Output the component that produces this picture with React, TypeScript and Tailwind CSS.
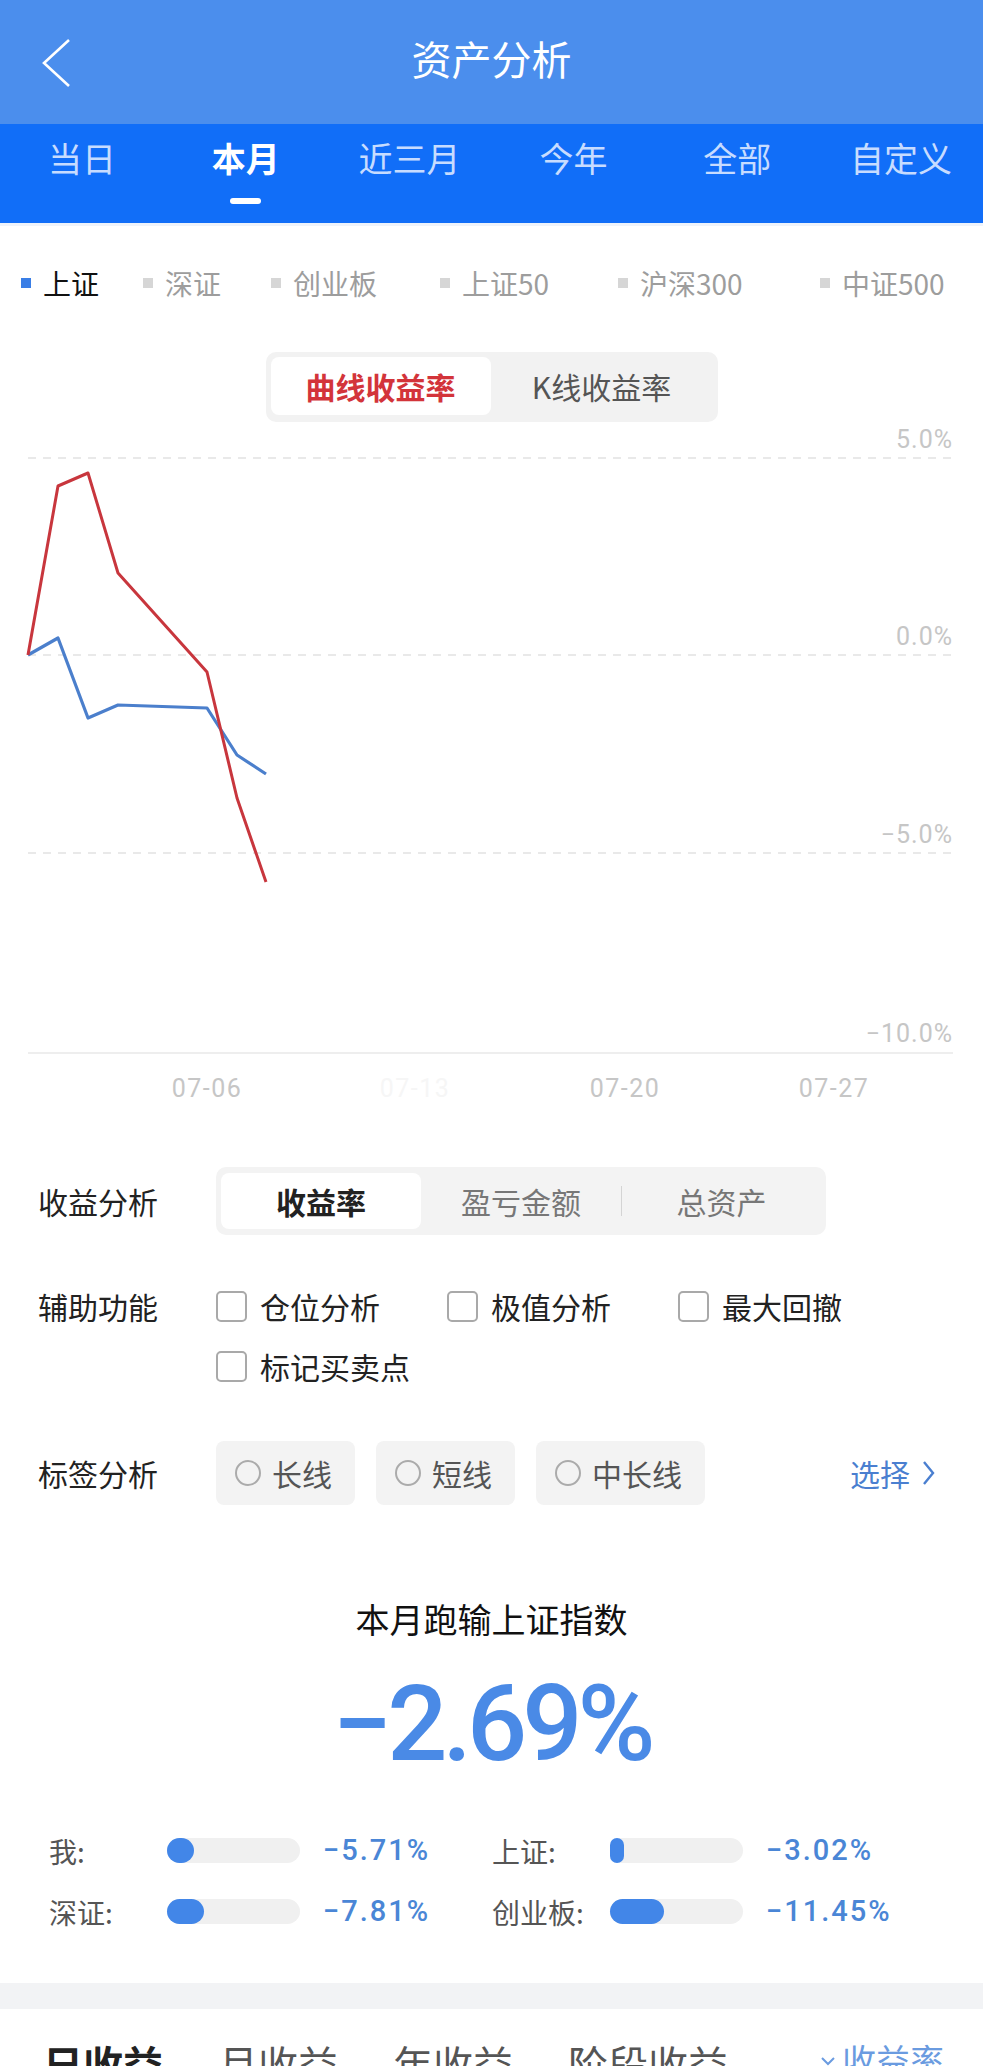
const TABS = ["当日", "本月", "近三月", "今年", "全部", "自定义"];

const INDEXES = [
  { name: "上证", active: true },
  { name: "深证", active: false },
  { name: "创业板", active: false },
  { name: "上证50", active: false },
  { name: "沪深300", active: false },
  { name: "中证500", active: false },
];

const TOOLS = ["仓位分析", "极值分析", "最大回撤", "标记买卖点"];
const TAGS = ["长线", "短线", "中长线"];

const COMPARE = [
  { label: "我:", value: 5.71 },
  { label: "上证:", value: 3.02 },
  { label: "深证:", value: 7.81 },
  { label: "创业板:", value: 11.45 },
];

// chart coordinates, one point per trading day
const XS = [28, 58, 88, 118, 207, 237, 266];
const MINE = [233, 64, 51, 151, 250, 376, 460];
const SH = [233, 216, 296, 283, 286, 333, 352];

const toPoints = (ys: number[]) => XS.map((x, i) => `${x},${ys[i]}`).join(" ");

function ReturnChart() {
  const yLabels = [
    { t: "5.0%", y: 26 },
    { t: "0.0%", y: 223 },
    { t: "−5.0%", y: 421 },
    { t: "−10.0%", y: 620 },
  ];
  const xLabels = [
    { t: "07-06", x: 207, c: "#c6c6c6" },
    { t: "07-13", x: 415, c: "#f6f6f6" },
    { t: "07-20", x: 625, c: "#c6c6c6" },
    { t: "07-27", x: 834, c: "#c6c6c6" },
  ];
  return (
    <svg width={983} height={698} className="block">
      {[36, 233, 431].map((y) => (
        <line key={y} x1={28} x2={953} y1={y} y2={y} stroke="#e9e9e9" strokeWidth={2} strokeDasharray="8 7" />
      ))}
      <line x1={28} x2={953} y1={631} y2={631} stroke="#eeeeee" strokeWidth={2} />
      {yLabels.map((l) => (
        <text key={l.t} x={953} y={l.y} textAnchor="end" fontFamily="Roboto, sans-serif" fontSize={25} letterSpacing={1} fill="#c6c6c6">
          {l.t}
        </text>
      ))}
      {xLabels.map((l) => (
        <text key={l.t} x={l.x} y={675} textAnchor="middle" fontFamily="Roboto, sans-serif" fontSize={25} letterSpacing={1.5} fill={l.c}>
          {l.t}
        </text>
      ))}
      <polyline points={toPoints(SH)} fill="none" stroke="#4b7fcc" strokeWidth={3.2} strokeLinejoin="round" />
      <polyline points={toPoints(MINE)} fill="none" stroke="#c8363d" strokeWidth={3} strokeLinejoin="round" />
    </svg>
  );
}

export default function App() {
  return (
    <div className="w-[983px] bg-white font-['Noto_Sans_CJK_SC',sans-serif] text-[#222]">
      {/* title bar */}
      <header className="grid h-[124px] grid-cols-[1fr_auto_1fr] bg-[#4b8eed] pt-[38px]">
        <div className="pl-[41px]">
          <svg width="30" height="50" viewBox="0 0 30 50">
            <polyline points="28,2 3,25 28,48" fill="none" stroke="white" strokeWidth="2.6" />
          </svg>
        </div>
        <h1 className="text-[40px] leading-none text-white">资产分析</h1>
        <div />
      </header>

      {/* period tabs */}
      <nav className="grid h-[99px] grid-cols-6 bg-[#116ef8]">
        {TABS.map((t) => (
          <div key={t} className="flex flex-col items-center pt-[17px]">
            <span className={t === "本月" ? "text-[34px] font-bold leading-none text-white" : "text-[34px] leading-none text-[#c7dcff]"}>{t}</span>
            {t === "本月" && <span className="mt-[23px] h-[6px] w-[31px] rounded-[3px] bg-white" />}
          </div>
        ))}
      </nav>
      <div className="h-[3px] bg-[#eef3fb]" />

      {/* index legend */}
      <div className="grid h-[114px] grid-cols-[122px_128px_169px_178px_202px_auto] items-center pl-[21px]">
        {INDEXES.map((i) => (
          <div key={i.name} className="flex items-center gap-[12px]">
            <span className={i.active ? "size-[10px] bg-[#3a7ee6]" : "size-[10px] bg-[#d6d6d6]"} />
            <span className={i.active ? "text-[28px] leading-none text-[#111]" : "text-[28px] leading-none text-[#9d9d9d]"}>{i.name}</span>
          </div>
        ))}
      </div>

      {/* chart mode switch */}
      <div className="mt-[12px] flex justify-center">
        <div className="flex h-[70px] w-[452px] rounded-[10px] bg-[#f2f2f2] p-[5px]">
          <div className="flex h-[58px] w-[220px] items-center justify-center rounded-[8px] bg-white text-[30px] font-bold leading-none text-[#d3343a]">
            曲线收益率
          </div>
          <div className="flex h-[58px] flex-1 items-center justify-center text-[30px] leading-none text-[#555]">K线收益率</div>
        </div>
      </div>

      <ReturnChart />

      {/* analysis options */}
      <div className="flex items-center pl-[38px] pt-[47px]">
        <span className="w-[178px] text-[30px] leading-none">收益分析</span>
        <div className="flex h-[68px] w-[610px] items-center rounded-[10px] bg-[#f3f3f3] p-[5px]">
          <div className="flex h-[56px] w-[200px] items-center justify-center rounded-[8px] bg-white text-[30px] font-bold leading-none">收益率</div>
          <div className="flex w-[200px] items-center justify-center text-[30px] leading-none text-[#777]">盈亏金额</div>
          <div className="h-[30px] w-px bg-[#d4d4d4]" />
          <div className="flex flex-1 items-center justify-center text-[30px] leading-none text-[#777]">总资产</div>
        </div>
      </div>

      <div className="mt-[41px] flex pl-[38px]">
        <span className="flex h-[60px] w-[178px] items-center text-[30px] leading-none">辅助功能</span>
        <div className="grid grid-cols-[231px_231px_auto]">
          {TOOLS.map((t) => (
            <label key={t} className="flex h-[60px] items-center gap-[13px]">
              <span className="size-[31px] rounded-[5px] border-2 border-[#a9a9a9]" />
              <span className="text-[30px] leading-none">{t}</span>
            </label>
          ))}
        </div>
      </div>

      <div className="mt-[45px] flex items-center pl-[38px] pr-[48px]">
        <span className="w-[178px] text-[30px] leading-none">标签分析</span>
        <div className="flex gap-[21px]">
          {TAGS.map((t) => (
            <div key={t} className="flex h-[64px] items-center gap-[11px] rounded-[8px] bg-[#f3f3f3] pl-[19px] pr-[23px]">
              <span className="size-[26px] rounded-full border-2 border-[#ababab]" />
              <span className="text-[30px] leading-none text-[#555]">{t}</span>
            </div>
          ))}
        </div>
        <div className="ml-auto flex items-center gap-[12px] text-[30px] leading-none text-[#4a7fd0]">
          选择
          <svg width="13" height="26" viewBox="0 0 13 26">
            <polyline points="2,2 11,13 2,24" fill="none" stroke="#4a7fd0" strokeWidth="2.4" />
          </svg>
        </div>
      </div>

      {/* month vs index summary */}
      <p className="mt-[97px] text-center text-[34px] leading-none text-[#111]">本月跑输上证指数</p>
      <p className="mt-[35px] text-center font-['Roboto',sans-serif] text-[106px] font-medium leading-none tracking-[-5px] text-[#4a8ae6]">
        −2.69%
      </p>

      <div className="mt-[43px] grid grid-cols-[443px_auto] pl-[49px]">
        {COMPARE.map((c) => (
          <div key={c.label} className="flex h-[61px] items-center">
            <span className="w-[118px] text-[28px] leading-none text-[#555]">{c.label}</span>
            <div className="h-[25px] w-[133px] rounded-full bg-[#f0f0f0]">
              <div className="h-full rounded-full bg-[#4286e8]" style={{ width: c.value * 4.7 }} />
            </div>
            <span className="ml-[23px] font-['Roboto',sans-serif] text-[29px] font-medium leading-none tracking-[2px] text-[#4a86d6]">
              −{c.value.toFixed(2)}%
            </span>
          </div>
        ))}
      </div>

      <div className="mt-[41px] h-[26px] bg-[#f2f3f5]" />

      {/* earnings tabs */}
      <div className="mt-[34px] flex items-start gap-[55px] pl-[43px] pr-[39px]">
        <span className="text-[40px] font-bold leading-none text-[#222]">日收益</span>
        <span className="text-[40px] leading-none text-[#555]">月收益</span>
        <span className="text-[40px] leading-none text-[#555]">年收益</span>
        <span className="text-[40px] leading-none text-[#555]">阶段收益</span>
        <span className="ml-auto flex items-center gap-[6px] text-[34px] leading-none text-[#6a9be0]">
          <svg width="16" height="20" viewBox="0 0 16 20">
            <polyline points="2,8 8,14 14,8" fill="none" stroke="#6a9be0" strokeWidth="2" />
          </svg>
          收益率
        </span>
      </div>
    </div>
  );
}
